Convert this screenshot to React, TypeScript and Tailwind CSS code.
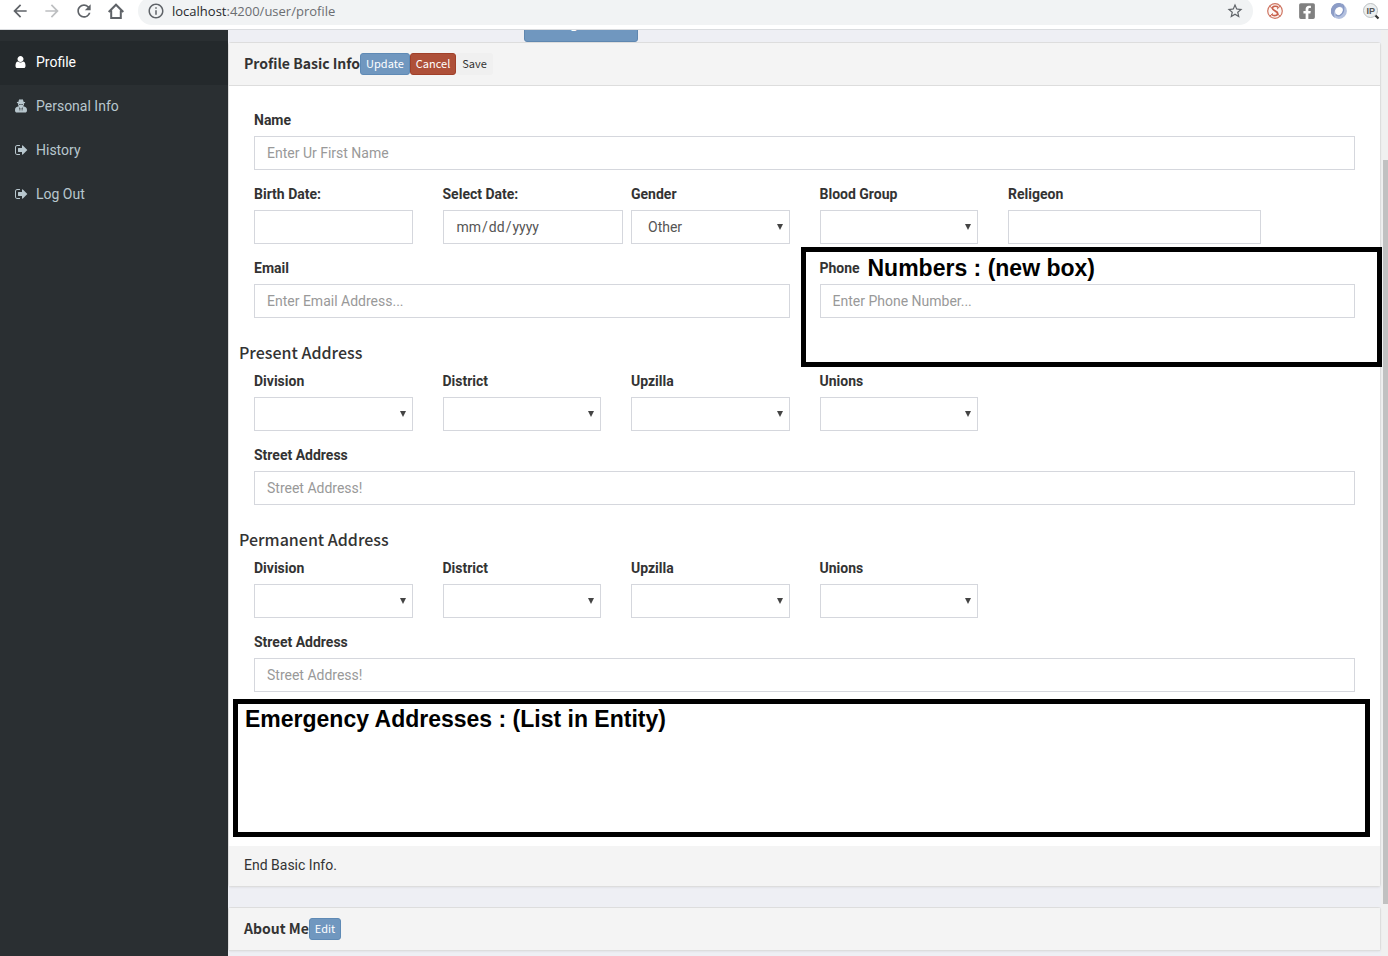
import { useId, type ReactNode } from "react";
import { FaFacebookSquare } from "react-icons/fa";
import { MdArrowBack, MdArrowForward, MdInfoOutline, MdRefresh, MdStarBorder } from "react-icons/md";

const control =
  "block h-[34px] w-full min-w-0 appearance-none rounded-none border border-[#d5d7dd] bg-white px-3 text-sm text-[#555] placeholder:text-[#999] placeholder:opacity-100";

const labelStyle = "mb-[7px] block text-sm leading-[18px] font-bold text-[#333]";

const headingFont = "font-['Noto_Sans_CJK_SC','Noto_Sans',sans-serif]";

function UserIcon() {
  return (
    <svg viewBox="0 0 1280 1792" className="h-3.5 w-[11px]" fill="currentColor" aria-hidden="true">
      <path d="M1280 1399q0 109-62.5 187t-150.5 78h-854q-88 0-150.5-78t-62.5-187q0-85 8.5-160.5t31.5-152 58.5-131 94-89 134.5-34.5q131 128 313 128t313-128q76 0 134.5 34.5t94 89 58.5 131 31.5 152 8.5 160.5zm-256-887q0 159-112.5 271.5t-271.5 112.5-271.5-112.5-112.5-271.5 112.5-271.5 271.5-112.5 271.5 112.5 112.5 271.5z" />
    </svg>
  );
}

function SecretUserIcon() {
  return (
    <svg viewBox="0 0 12 14" className="h-3.5 w-3" fill="currentColor" aria-hidden="true">
      <path d="M3.500 2.800C3.700 1.300 4 .3 4.900.3c.4 0 .7.300 1.100.3s.7-.3 1.100-.3c.9 0 1.200 1 1.400 2.500 1 .2 1.700.5 1.700.8 0 .4-.6.6-1.400.8l.2.9c0 .8-.5 1.300-.8 1.900C10.700 7.500 12 8.700 12 11.200 12 12.700 11.300 13.500 10 13.500H2C.7 13.500 0 12.700 0 11.200 0 8.700 1.300 7.500 3.800 7.200 3.500 6.600 3 6.100 3 5.300l.2-.9c-.8-.2-1.400-.4-1.400-.8 0-.3.7-.6 1.700-.8Z" />
      <path d="m4.100 8.200 1.300 1-.4 3.200ZM7.900 8.200l-1.300 1 .4 3.200ZM4 5h1.700v.8H4.300ZM6.300 5H8l-.3.800H6.300Z" fill="#2a2f32" />
    </svg>
  );
}

function SignOutIcon() {
  return (
    <svg viewBox="0 0 1664 1792" className="h-3.5 w-[13px]" fill="currentColor" aria-hidden="true">
      <path d="M640 1440q0 4 1 20t.5 26.5-3 23.5-10 19.5-20.5 6.5h-320q-119 0-203.5-84.5t-84.5-203.5v-704q0-119 84.5-203.5t203.5-84.5h320q13 0 22.5 9.5t9.5 22.5q0 4 1 20t.5 26.5-3 23.5-10 19.5-20.5 6.5h-320q-66 0-113 47t-47 113v704q0 66 47 113t113 47h312l11.5 1 11.5 3 8 5.5 7 9 2 13.5zm928-544q0 26-19 45l-544 544q-19 19-45 19t-45-19-19-45v-288h-448q-26 0-45-19t-19-45v-384q0-26 19-45t45-19h448v-288q0-26 19-45t45-19 45 19l544 544q19 19 19 45z" />
    </svg>
  );
}

function HomeIcon() {
  return (
    <svg viewBox="0 0 20 20" className="size-5" fill="none" stroke="currentColor" strokeWidth="2" aria-hidden="true">
      <path d="M2.700 11 10 3.700l7.300 7.300M5.200 9.500V17h9.600V9.500" />
    </svg>
  );
}

function ScriptIcon() {
  return (
    <svg viewBox="0 0 16 16" className="size-4" fill="none" aria-hidden="true">
      <circle cx="8" cy="8" r="7.300" fill="#fdf6f4" stroke="#cf7561" strokeWidth="1.200" />
      <path d="M11.200 4.400C9.800 2.600 5.200 3 5.400 5.400c.2 2.200 5.300 2.400 5.400 4.900.1 2.600-4.400 3-6 1.100" stroke="#c8604b" strokeWidth="1.600" />
      <path d="M2.700 3 13 13.300M13.300 3l-3.300 3.200M2.800 13.200l3-2.800" stroke="#c8604b" strokeWidth="1" />
    </svg>
  );
}

function SwirlIcon() {
  return (
    <svg viewBox="0 0 16 16" className="size-4" fill="none" aria-hidden="true">
      <circle cx="8" cy="8" r="5.900" stroke="#b3c0de" strokeWidth="4" />
      <path d="M8.500 0A8 8 0 0 0 4 15C1.800 10.500 3.500 5 8.500 3.800c1.600-.3 2.800.4 3.300 1.400C12.300 2.500 11 .5 8.500 0Z" fill="#8c9cc6" />
      <path d="M11.500 1c2.500 3.500 1.500 9.800-3 11.700-1.700.6-3 0-3.800-1" stroke="#8395c2" strokeWidth="1.200" />
    </svg>
  );
}

function IpIcon() {
  return (
    <svg viewBox="0 0 16 16" className="size-4 overflow-visible" aria-hidden="true">
      <circle cx="7.500" cy="7.500" r="7" fill="#eceff0" stroke="#bcc0c2" />
      <path d="m12.500 12.500 3 3" stroke="#333" strokeWidth="2.200" />
      <text x="7.800" y="10.600" textAnchor="middle" fill="#555" className="font-['Liberation_Sans',Arial,sans-serif] text-[9px] font-bold">
        IP
      </text>
    </svg>
  );
}

function BrowserBar() {
  return (
    <header className="flex h-[30px] shrink-0 items-center border-b border-[#dadcdf] bg-white pr-[9px] pb-[7px] pl-2.5 text-[#5f6368]">
      <div className="flex items-center gap-3">
        <button aria-label="Back"><MdArrowBack className="size-5" /></button>
        <button aria-label="Forward" className="text-[#bdbfc1]"><MdArrowForward className="size-5" /></button>
        <button aria-label="Reload"><MdRefresh className="size-5" /></button>
        <button aria-label="Home"><HomeIcon /></button>
      </div>
      <div className="ml-3 flex h-7 flex-1 items-center rounded-full bg-[#f1f3f4] px-[9px]">
        <MdInfoOutline className="size-[18px]" aria-hidden="true" />
        <span className="ml-[7px] flex-1 font-['Open_Sans',sans-serif] text-[13px] leading-5 text-[#6b6e72]">
          <span className="text-[#27292c]">localhost</span>:4200/user/profile
        </span>
        <button aria-label="Bookmark"><MdStarBorder className="size-[18px]" /></button>
      </div>
      <div className="ml-3.5 flex items-center gap-4">
        <ScriptIcon />
        <FaFacebookSquare className="-mx-px size-[18px] text-[#808080]" aria-hidden="true" />
        <SwirlIcon />
        <IpIcon />
      </div>
    </header>
  );
}

function NavItem({ icon, active, children }: { icon: ReactNode; active?: boolean; children: ReactNode }) {
  return (
    <li>
      <a
        href="#"
        className={
          active
            ? "flex h-11 items-center bg-[#24292c] pb-0.5 pl-[15px] text-sm text-white"
            : "flex h-11 items-center pb-0.5 pl-[15px] text-sm text-[#b8c7ce]"
        }
      >
        <span className="flex w-[21px] items-center">{icon}</span>
        {children}
      </a>
    </li>
  );
}

function Field({ label, span, children }: { label: string; span: string; children: (id: string) => ReactNode }) {
  const id = useId();
  return (
    <div className={span}>
      <label htmlFor={id} className={labelStyle}>{label}</label>
      {children(id)}
    </div>
  );
}

function Select({ id, options }: { id: string; options: string[] }) {
  return (
    <div className="relative">
      <select id={id} className={control + " pl-4"}>
        {options.map((option) => (
          <option key={option}>{option}</option>
        ))}
      </select>
      <svg viewBox="0 0 6 6" className="pointer-events-none absolute top-3.5 right-[7px] size-1.5" fill="#444" aria-hidden="true">
        <path d="M0 0h6L3 6Z" />
      </svg>
    </div>
  );
}

function Row({ children }: { children: ReactNode }) {
  return <div className="mx-[15px] grid grid-cols-12 gap-x-[30px]">{children}</div>;
}

function AddressSection({ title }: { title: string }) {
  return (
    <section className="flex flex-col">
      <h4 className={headingFont + " mt-2.5 mb-[11px] text-base leading-[18px] font-medium text-[#333]"}>{title}</h4>
      <div className="flex flex-col gap-[15px]">
        <Row>
          {["Division", "District", "Upzilla", "Unions"].map((label) => (
            <Field key={label} label={label} span="col-span-2">
              {(id) => <Select id={id} options={[""]} />}
            </Field>
          ))}
        </Row>
        <Row>
          <Field label="Street Address" span="col-span-12">
            {(id) => <input id={id} type="text" placeholder="Street Address!" className={control} />}
          </Field>
        </Row>
      </div>
    </section>
  );
}

const smallButton = headingFont + " h-[22px] rounded-[3px] border px-[5px] text-[11px] leading-[18px] pb-0.5";

function PanelHeader({ title, children }: { title: string; children: ReactNode }) {
  return (
    <div className="flex h-[43px] items-center border-b border-[#ddd] bg-[#f4f4f4] px-[15px]">
      <h3 className={headingFont + " pb-[3px] text-sm leading-5 font-bold text-[#333]"}>{title}</h3>
      {children}
    </div>
  );
}

export default function App() {
  return (
    <div className="flex min-h-screen flex-col overflow-hidden bg-[#eeeff4] font-[Roboto,sans-serif] text-sm text-[#333]">
      <BrowserBar />
      <div className="flex flex-1">
        <nav className="w-[228px] shrink-0 bg-[#2a2f32] pt-[11px]">
          <ul>
            <NavItem icon={<UserIcon />} active>Profile</NavItem>
            <NavItem icon={<SecretUserIcon />}>Personal Info</NavItem>
            <NavItem icon={<SignOutIcon />}>History</NavItem>
            <NavItem icon={<SignOutIcon />}>Log Out</NavItem>
          </ul>
        </nav>

        <main className="relative z-10 min-w-0 flex-1">
          <div className="flex h-3 items-end overflow-hidden pl-[296px]">
            <button className={headingFont + " h-[34px] w-[114px] shrink-0 rounded-[3px] border border-[#5f87b0] bg-[#7097bf] pb-[3px] text-[13px] text-white"}>
              Change Photo
            </button>
          </div>

          <section className="rounded-[3px] border border-[#ddd] bg-white shadow-xs">
            <PanelHeader title="Profile Basic Info">
              <button className={smallButton + " border-[#5f8ab5] bg-[#7097bf] text-white"}>Update</button>
              <button className={smallButton + " border-[#a0402a] bg-[#ae5039] text-white"}>Cancel</button>
              <button className={smallButton + " border-[#f0f0f0] bg-[#f0f0f0] text-[#333]"}>Save</button>
            </PanelHeader>

            <form className="px-2.5 pt-[25px] pb-[9px]">
              <div className="mb-[15px] flex flex-col gap-[15px]">
                <Row>
                  <Field label="Name" span="col-span-12">
                    {(id) => <input id={id} type="text" placeholder="Enter Ur First Name" className={control} />}
                  </Field>
                </Row>
                <Row>
                  <Field label="Birth Date:" span="col-span-2">
                    {(id) => <input id={id} type="text" className={control} />}
                  </Field>
                  <Field label="Select Date:" span="col-span-2 -mr-[22px]">
                    {(id) => (
                      <input
                        id={id}
                        type="date"
                        className={control + " [&::-webkit-calendar-picker-indicator]:hidden"}
                      />
                    )}
                  </Field>
                  <Field label="Gender" span="col-span-2">
                    {(id) => <Select id={id} options={["Other", "Male", "Female"]} />}
                  </Field>
                  <Field label="Blood Group" span="col-span-2">
                    {(id) => <Select id={id} options={[""]} />}
                  </Field>
                  <Field label="Religeon" span="col-span-3">
                    {(id) => <input id={id} type="text" className={control} />}
                  </Field>
                </Row>
                <Row>
                  <Field label="Email" span="col-span-6">
                    {(id) => <input id={id} type="email" placeholder="Enter Email Address..." className={control} />}
                  </Field>
                  <div className="relative col-span-6">
                    <Field label="Phone" span="">
                      {(id) => <input id={id} type="tel" placeholder="Enter Phone Number..." className={control} />}
                    </Field>
                    <div className="pointer-events-none absolute -top-3 -right-[27px] -left-[19px] h-[120px] border-[5px] border-black px-[62px] py-0.5">
                      <p className="font-['Liberation_Sans',Arial,sans-serif] text-[23px] leading-7 font-bold text-black">
                        Numbers : (new box)
                      </p>
                    </div>
                  </div>
                </Row>
              </div>

              <div className="flex flex-col gap-[15px]">
                <AddressSection title="Present Address" />
                <AddressSection title="Permanent Address" />
              </div>

              <section className="mt-[7px] -ml-1.5 h-[138px] border-[5px] border-black px-[7px] py-px">
                <h2 className="font-['Liberation_Sans',Arial,sans-serif] text-[23px] leading-7 font-bold text-black">
                  Emergency Addresses : (List in Entity)
                </h2>
              </section>
            </form>

            <footer className="bg-[#f4f4f4] px-[15px] pt-2.5 pb-3 leading-[18px]">End Basic Info.</footer>
          </section>

          <section className="mt-5 rounded-[3px] border border-b-0 border-[#ddd] bg-white shadow-xs">
            <PanelHeader title="About Me">
              <button className={smallButton + " border-[#5f8ab5] bg-[#7097bf] text-white"}>Edit</button>
            </PanelHeader>
          </section>
        </main>

        <div className="w-[7px] shrink-0 bg-[#f0f0f0] pt-[130px] pl-0.5" aria-hidden="true">
          <div className="h-[744px] bg-[#c1c1c1]" />
        </div>
      </div>
    </div>
  );
}
